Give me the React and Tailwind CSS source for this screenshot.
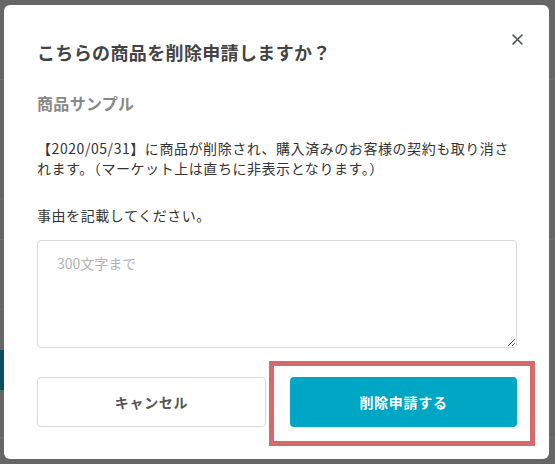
import React from "react";

export default function App() {
  return (
    <div
      className="relative w-[555px] h-[464px] overflow-hidden bg-[#666666]"
      style={{ fontFamily: '"Noto Sans CJK JP", "Noto Sans", sans-serif' }}
    >
      {/* dimmed page behind the overlay */}
      <div className="flex flex-col">
        <div className="h-[80px] border-b border-[#707070]" />
        <div className="h-[120px] border-b border-[#6c6c6c] mr-[500px]" />
        <div className="h-[40px] border-b border-[#707070]" />
        <div className="h-[70px] border-b border-[#6c6c6c] mr-[500px]" />
        <div className="h-[40px]" />
        <div className="h-[40px] w-[4px] bg-[#0b4f5c]" />
        <div className="h-[48px] border-b border-[#707070]" />
      </div>

      {/* modal */}
      <div className="absolute left-[4px] top-[5px] w-[545px] h-[454px] rounded-[6px] bg-white pl-[33px] pr-[32px] pt-[33px]">
        <button className="absolute right-[22px] top-[24px] w-[20px] h-[20px] flex items-center justify-center">
          <svg width="11" height="11" viewBox="0 0 11 11">
            <path d="M1 1L10 10M10 1L1 10" stroke="#4a4f55" strokeWidth="1.6" strokeLinecap="round" />
          </svg>
        </button>

        <h2 className="text-[18px] leading-[28px] font-bold text-[#444444] tracking-[0.02em]">
          こちらの商品を削除申請しますか？
        </h2>

        <p className="mt-[25px] text-[16px] leading-[24px] font-bold text-[#888888] tracking-[0.02em]">
          商品サンプル
        </p>

        <p className="mt-[23px] text-[14px] leading-[20px] text-[#333333] tracking-[0.04em]">
          <span className="block whitespace-nowrap">【2020/05/31】に商品が削除され、購入済みのお客様の契約も取り消さ</span>
          <span className="block whitespace-nowrap">れます。（マーケット上は直ちに非表示となります。）</span>
        </p>

        <p className="mt-[27px] text-[14px] leading-[20px] text-[#333333] tracking-[0.04em]">
          事由を記載してください。
        </p>

        <textarea
          className="mt-[15px] block w-[480px] h-[108px] rounded-[4px] border border-[#d9d9d9] pl-[19px] pr-[17px] pt-[12px] pb-[12px] text-[14px] leading-[20px] text-[#333333] placeholder:text-[#b3b3b3] outline-none"
          placeholder="300文字まで"
        />

        <div className="mt-[29px] flex gap-[24px] w-[480px]">
          <button className="flex-1 h-[50px] rounded-[4px] border border-[#d9d9d9] bg-white text-[14px] font-bold text-[#555555] tracking-[0.05em]">
            キャンセル
          </button>
          <button className="flex-1 h-[50px] rounded-[4px] bg-[#00a7c4] text-[14px] font-bold text-white tracking-[0.05em]">
            削除申請する
          </button>
        </div>
      </div>

      {/* annotation highlight */}
      <div className="absolute left-[269px] top-[361px] w-[266px] h-[85px] border-[5px] border-[#d46a6a] pointer-events-none" />
    </div>
  );
}
